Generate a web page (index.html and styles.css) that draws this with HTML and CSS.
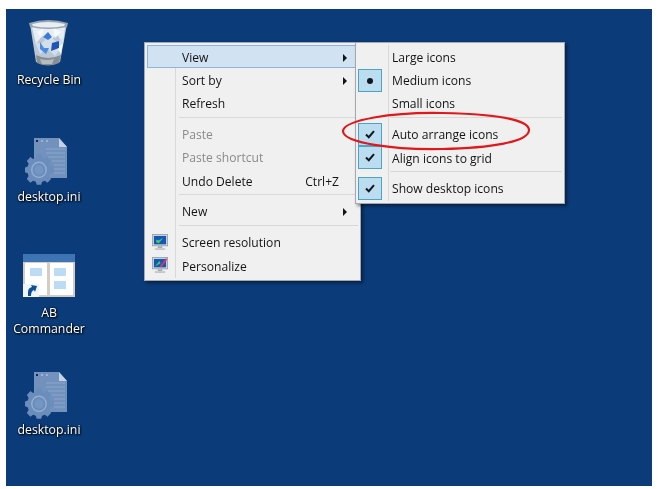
FILE: index.html
```html
<!DOCTYPE html>
<html lang="en">
<head>
    <meta charset="UTF-8">
    <title>Desktop context menu</title>
    <link rel="stylesheet" href="styles.css">
</head>
<body>
    <svg class="defs" width="0" height="0">
        <defs>
            <symbol id="ini" viewBox="0 0 44 48">
                <path d="M10 1H35L43 10V41H10Z" fill="#7292bd"/>
                <path d="M35 1V10H43Z" fill="#c3d2e6"/>
                <path d="M22 12H41M22 16H41M24 20H41M28 24H41M30 28H41M30 32H41M30 36H41" stroke="#8aa6cb" stroke-width="1"/>
                <rect x="12" y="3" width="2" height="2" fill="#12284e"/>
                <rect x="17" y="3" width="2" height="2" fill="#9cb3d3"/>
                <rect x="22" y="3" width="2" height="2" fill="#9cb3d3"/>
                <g transform="translate(1 3) scale(0.9 0.95)">
                    <path d="M13 15H18L19 19L22 20L25 18L29 22L27 25L28 28L32 29V34L28 35L27 38L29 41L25 45L22 43L19 44L18 47H13L12 44L9 43L6 45L2 41L4 38L3 35L0 34V29L3 28L4 25L2 22L6 18L9 20L12 19Z" fill="#6a8dbb"/>
                    <circle cx="15.500" cy="31.500" r="8" fill="none" stroke="#93aed0" stroke-width="1.600"/>
                    <circle cx="15.500" cy="31.500" r="5" fill="#7396c3"/>
                </g>
            </symbol>
            <symbol id="screen" viewBox="0 0 17 18">
                <rect x="0.500" y="0.500" width="16" height="12" fill="#d5dde2" stroke="#9aa7ad"/>
                <rect x="2" y="2" width="13" height="9" fill="#1557b8"/>
                <rect x="6" y="13" width="5" height="2" fill="#a4adb0"/>
                <rect x="3" y="15" width="11" height="2" fill="#c2c8cb"/>
            </symbol>
        </defs>
    </svg>

    <div class="desktop">
        <div class="icon icon-bin">
            <svg class="glyph" width="44" height="50" viewBox="0 0 44 50">
                <path d="M3 6L9 44Q21 50 33 44L40 6Z" fill="#b9c8d4"/>
                <path d="M5 9L9 26L15 18L22 24L30 16L36 26L38 9Z" fill="#e6edf3"/>
                <path d="M8 24L13 36L20 30L28 38L34 30L36 20L30 24L22 18L14 26Z" fill="#d3dee8"/>
                <path d="M10 14L17 10L14 20ZM26 10L34 14L28 20ZM30 30L36 25L34 36Z" fill="#f6f9fb"/>
                <path d="M9 37L10 45Q21 50 32 45L34 37Q21 43 9 37Z" fill="#878f94"/>
                <path d="M13 41L15 46L25 46L27 41Q20 43 13 41Z" fill="#b5bcc0"/>
                <path d="M2 5Q21 -1 41 5L40 9Q21 13 3 9Z" fill="#98a5ae"/>
                <path d="M5 6Q21 2 38 6L37 8Q21 11 6 8Z" fill="#e8eef3"/>
                <path d="M16 19L21 14L25 19L21 22Z" fill="#3b7ad6"/>
                <path d="M25 25L32 23L32 30L24 33Z" fill="#1d55b8"/>
                <path d="M13 24L17 30L22 30L19 36L13 31Z" fill="#4a8ae4"/>
            </svg>
            <span class="label">Recycle Bin</span>
        </div>

        <div class="icon icon-ini-a">
            <svg class="glyph glyph-ini" width="44" height="48"><use href="#ini"/></svg>
            <span class="label">desktop.ini</span>
        </div>

        <div class="icon icon-ab">
            <svg class="glyph" width="52" height="43" viewBox="0 0 52 43">
                <rect width="52" height="43" fill="#d3cdc4"/>
                <rect width="52" height="8" fill="#3f74b4"/>
                <rect x="2" y="9" width="22" height="32" fill="#ffffff"/>
                <rect x="27" y="9" width="23" height="32" fill="#ffffff"/>
                <rect x="7" y="14" width="12" height="8" fill="#bcdcf6"/>
                <rect x="31" y="14" width="12" height="8" fill="#bcdcf6"/>
                <rect x="31" y="27" width="12" height="8" fill="#bcdcf6"/>
                <rect y="30" width="16" height="14" fill="#f2f5f8"/>
                <path d="M5 42V38Q5 34 9 33L8 31L14 32L12 38L11 36Q8 37 8 42Z" fill="#0f4f96"/>
            </svg>
            <span class="label">AB<br>Commander</span>
        </div>

        <div class="icon icon-ini-b">
            <svg class="glyph glyph-ini" width="44" height="48"><use href="#ini"/></svg>
            <span class="label">desktop.ini</span>
        </div>

        <div class="menu menu-main">
            <div class="row row-active"><span class="text">View</span><span class="arrow"></span></div>
            <div class="row"><span class="text">Sort by</span><span class="arrow"></span></div>
            <div class="row"><span class="text">Refresh</span></div>
            <div class="sep"></div>
            <div class="row row-off"><span class="text">Paste</span></div>
            <div class="row row-off"><span class="text">Paste shortcut</span></div>
            <div class="row row-low"><span class="text">Undo Delete</span><span class="keys">Ctrl+Z</span></div>
            <div class="sep"></div>
            <div class="row"><span class="text">New</span><span class="arrow"></span></div>
            <div class="sep"></div>
            <div class="row">
                <svg class="row-icon" width="16" height="17" viewBox="0 0 17 18">
                    <use href="#screen" width="17" height="18"/>
                    <path d="M4 8L7 10L12 4L7 7L5 6Z" fill="#4fd04a"/>
                </svg>
                <span class="text">Screen resolution</span>
            </div>
            <div class="row row-low">
                <svg class="row-icon" width="16" height="17" viewBox="0 0 17 18">
                    <use href="#screen" width="17" height="18"/>
                    <path d="M3 10L8 4L9 7L3 10Z" fill="#35d05a"/>
                    <path d="M8 10L15 1L16 3L10 11Z" fill="#d8336a"/>
                </svg>
                <span class="text">Personalize</span>
            </div>
        </div>

        <div class="menu menu-sub">
            <div class="row"><span class="text">Large icons</span></div>
            <div class="row">
                <span class="mark"><span class="dot"></span></span>
                <span class="text">Medium icons</span>
            </div>
            <div class="row"><span class="text">Small icons</span></div>
            <div class="sep"></div>
            <div class="row">
                <span class="mark"><svg width="10" height="9" viewBox="0 0 10 9"><path d="M1 4.500L3.800 7.200L9 1.200" fill="none" stroke="#10181f" stroke-width="2"/></svg></span>
                <span class="text">Auto arrange icons</span>
            </div>
            <div class="row row-low">
                <span class="mark"><svg width="10" height="9" viewBox="0 0 10 9"><path d="M1 4.500L3.800 7.200L9 1.200" fill="none" stroke="#10181f" stroke-width="2"/></svg></span>
                <span class="text">Align icons to grid</span>
            </div>
            <div class="sep"></div>
            <div class="row">
                <span class="mark"><svg width="10" height="9" viewBox="0 0 10 9"><path d="M1 4.500L3.800 7.200L9 1.200" fill="none" stroke="#10181f" stroke-width="2"/></svg></span>
                <span class="text">Show desktop icons</span>
            </div>
        </div>

        <!-- Red hand-drawn ring around Auto arrange icons -->
        <svg class="ring" width="190" height="40" viewBox="0 0 190 40">
            <path d="M100 2C50 1 2 9 1 20C1 32 52 39 100 38C148 37 187 31 187 19C187 8 150 3 100 2Z" fill="none" stroke="#e0181c" stroke-width="2.200"/>
        </svg>
    </div>
</body>
</html>
```

FILE: styles.css
```css
body {
    margin: 0;
    background-color: white;
    font-family: "Open Sans", Arial, sans-serif;
}
.defs {
    display: block;
    height: 0;
}
.desktop {
    position: relative;
    width: 646px;
    height: 477px;
    margin: 9px 0 0 6px;
    background-color: #0b3b78;
    overflow: hidden;
    filter: blur(0.3px);
}

/* Desktop icons */
.icon {
    position: absolute;
    left: 0;
    width: 86px;
    display: flex;
    flex-direction: column;
    align-items: center;
}
.icon-bin { top: 9px; }
.icon-ini-a { top: 128px; }
.icon-ab { top: 245px; }
.icon-ini-b { top: 362px; }
.glyph {
    display: block;
}
.glyph-ini {
    margin-right: 7px;
}
.label {
    color: white;
    font-size: 12.300px;
    line-height: 16px;
    text-align: center;
    text-shadow: 1px 1px 2px #000, 0 0 2px #000;
}
.icon-bin .label { margin-top: 4px; }
.icon-ini-a .label { margin-top: 4px; }
.icon-ab .label { margin-top: 8px; }
.icon-ini-b .label { margin-top: 3px; }

/* Menus */
.menu {
    position: absolute;
    top: 33px;
    box-sizing: border-box;
    background-color: #f0f0f0;
    border: 1px solid #a3a9af;
    padding: 2px;
    box-shadow: 2px 2px 3px rgba(0, 0, 0, 0.45);
    font-size: 12.100px;
    color: #141414;
}
.menu-main {
    left: 138px;
    width: 217px;
    height: 239px;
}
.menu-sub {
    left: 349px;
    width: 210px;
    height: 162px;
}
.menu-main::before,
.menu-sub::before {
    content: "";
    position: absolute;
    top: 2px;
    bottom: 2px;
    width: 1px;
    background-color: #d8d8d8;
}
.menu-main::before { left: 30px; }
.menu-sub::before { left: 32px; }
.row {
    position: relative;
    box-sizing: border-box;
    height: 23px;
    padding-top: 2px;
    display: flex;
    align-items: center;
}
.row-low {
    padding-top: 4px;
}
.menu-main .row { padding-left: 35px; padding-right: 8px; }
.menu-sub .row { padding-left: 34px; }
.menu-main .row-active {
    margin-right: -4px;
    padding-right: 12px;
    background-color: #d1e2f2;
    box-shadow: inset 0 0 0 1px #8fb4dc;
}
.row-off {
    color: #8a8a8a;
}
.text {
    flex: 1;
}
.keys {
    margin-right: 11px;
}
.arrow {
    width: 0;
    height: 0;
    margin-right: 3px;
    border-left: 4px solid #141414;
    border-top: 4px solid transparent;
    border-bottom: 4px solid transparent;
}
.sep {
    height: 1px;
    margin: 3px 0 4px 32px;
    background-color: #d8d8d8;
}
.row-icon {
    position: absolute;
    left: 5px;
    top: 4px;
}
.mark {
    position: absolute;
    left: 0;
    top: 1px;
    box-sizing: border-box;
    width: 24px;
    height: 23px;
    display: flex;
    align-items: center;
    justify-content: center;
    background-color: #bcdcf0;
    border: 1px solid #4ba3c7;
}
.dot {
    width: 6px;
    height: 6px;
    border-radius: 50%;
    background-color: #10181f;
}
.ring {
    position: absolute;
    left: 336px;
    top: 102px;
}
```
